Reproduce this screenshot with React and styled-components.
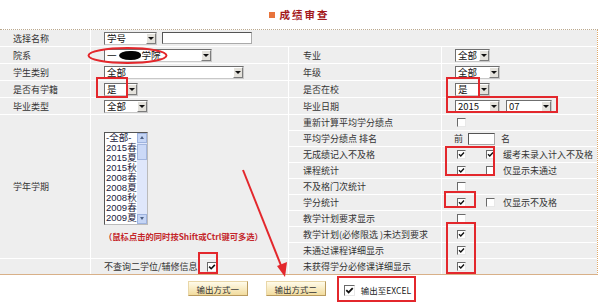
import styled, { createGlobalStyle } from 'styled-components';

const GlobalStyle = createGlobalStyle`
  html, body { margin: 0; padding: 0; background: #fff; }
  body {
    font-family: "Noto Sans CJK SC", "Liberation Sans", sans-serif;
    font-size: 9px;
    color: #333;
  }
`;

const Page = styled.div`
  position: relative;
  width: 599px;
  height: 307px;
  overflow: hidden;
`;

const Header = styled.div`
  width: 598px;
  height: 29px;
  display: flex;
  align-items: center;
  justify-content: center;
  border-bottom: 1px dotted #bba98f;
`;

const TitleMark = styled.span`
  width: 6px;
  height: 6px;
  background: #e8743c;
  margin-right: 5px;
`;

const Title = styled.span`
  font-size: 10.5px;
  font-weight: 700;
  color: #a3191c;
  letter-spacing: 2px;
`;

const Panel = styled.div`
  display: grid;
  grid-template-columns: 90px 197px 152px 155px;
  grid-template-rows: repeat(5, 16px) repeat(10, 15px);
  gap: 1px;
  width: 597px;
  background: #fff;
  border-right: 1px dotted #e0a868;
  border-bottom: 1px solid #d8b088;
`;

const Cell = styled.div`
  background: #eeeeee;
  display: flex;
  align-items: center;
  padding-left: ${(p) => p.$pad ?? 13}px;
  grid-column: ${(p) => p.$col || 'auto'};
  grid-row: ${(p) => p.$row || 'auto'};
  white-space: nowrap;
`;

const StackCell = styled(Cell)`
  flex-direction: column;
  align-items: flex-start;
  justify-content: center;
`;

const SelectBox = styled.div`
  display: inline-flex;
  width: ${(p) => p.$w}px;
  height: 13px;
  box-sizing: border-box;
  background: #fff;
  border: 1px solid;
  border-color: #6f6f6f #c8c8c8 #c8c8c8 #6f6f6f;
  margin-left: ${(p) => p.$ml || 0}px;
`;

const SelectValue = styled.span`
  flex: 1;
  display: flex;
  align-items: center;
  padding-left: 2px;
  font-size: 9.5px;
  color: #111;
  line-height: 11px;
`;

const SelectButton = styled.span`
  width: 10px;
  box-sizing: border-box;
  background: #e4e2dc;
  border: 1px solid;
  border-color: #fff #7c7c7c #7c7c7c #fff;
  display: flex;
  align-items: center;
  justify-content: center;
  &::after {
    content: '';
    border-left: 3px solid transparent;
    border-right: 3px solid transparent;
    border-top: 3px solid #111;
  }
`;

const Redact = styled.span`
  display: inline-block;
  width: 22px;
  height: 9px;
  margin: 0 1px 0 2px;
  background: #050505;
  border-radius: 50% 40% 45% 50%;
`;

const TextInput = styled.div`
  width: ${(p) => p.$w}px;
  height: 12px;
  box-sizing: border-box;
  background: #fff;
  border: 1px solid;
  border-color: #555 #aaa #aaa #555;
  margin-left: ${(p) => p.$ml || 0}px;
`;

const CheckBox = styled.span`
  position: relative;
  display: inline-block;
  width: ${(p) => p.$size || 9}px;
  height: ${(p) => p.$size || 9}px;
  box-sizing: border-box;
  background: #fff;
  border: 1px solid;
  border-color: #6a6a6a #e8e8e8 #e8e8e8 #6a6a6a;
  margin-left: ${(p) => p.$ml || 0}px;
  flex-shrink: 0;
  svg { position: absolute; left: 0; top: 0; }
`;

const Note = styled.div`
  margin-top: 5px;
  font-size: 8.3px;
  font-weight: 700;
  color: #c4262a;
`;

const ListBox = styled.div`
  display: flex;
  width: 44px;
  height: 93px;
  box-sizing: border-box;
  background: #fff;
  border: 1px solid;
  border-color: #555 #bbb #bbb #555;
`;

const ListItems = styled.div`
  flex: 1;
  padding-left: 1px;
  font-size: 9.5px;
  line-height: 10px;
  color: #1b1b40;
  font-family: "Liberation Sans", "Noto Sans CJK SC", sans-serif;
  overflow: hidden;
`;

const ScrollBar = styled.div`
  width: 10px;
  display: flex;
  flex-direction: column;
  background: #dfe7fb;
`;

const ScrollArrow = styled.span`
  height: 10px;
  box-sizing: border-box;
  background: #c5d5f5;
  border: 1px solid #9eb3de;
  display: flex;
  align-items: center;
  justify-content: center;
  &::after {
    content: '';
    border-left: 2.5px solid transparent;
    border-right: 2.5px solid transparent;
    ${(p) => (p.$up ? 'border-bottom: 3px solid #4d6185;' : 'border-top: 3px solid #4d6185;')}
  }
`;

const ScrollTrack = styled.div`
  flex: 1;
  padding-top: 1px;
`;

const ScrollThumb = styled.div`
  height: 16px;
  box-sizing: border-box;
  background: #cbd9f7;
  border: 1px solid #a3b6de;
`;

const BottomBar = styled.div`
  display: flex;
  justify-content: center;
  align-items: center;
  padding-top: 6px;
  width: 599px;
`;

const OutButton = styled.div`
  width: 60px;
  height: 15px;
  box-sizing: border-box;
  display: flex;
  align-items: center;
  justify-content: center;
  font-size: 8.5px;
  color: #333;
  background: linear-gradient(#fffbea, #f2dc9e);
  border: 1px solid;
  border-color: #e9d7a8 #b99a5e #b99a5e #e9d7a8;
  margin-left: ${(p) => p.$ml || 0}px;
`;

const ExcelOption = styled.div`
  display: flex;
  align-items: center;
  gap: 6px;
  margin-left: 18px;
  padding-top: 3px;
  font-size: 8.5px;
  color: #222;
`;

const Spaced = styled.span`
  margin-left: ${(p) => p.$ml}px;
`;

const Overlay = styled.svg`
  position: absolute;
  left: 0;
  top: 0;
  pointer-events: none;
`;

function Select({ w, value, ml }) {
  return (
    <SelectBox $w={w} $ml={ml}>
      <SelectValue>{value}</SelectValue>
      <SelectButton />
    </SelectBox>
  );
}

function Check({ on, size, ml }) {
  return (
    <CheckBox $size={size} $ml={ml}>
      {on && (
        <svg width={(size || 9) - 2} height={(size || 9) - 2} viewBox="0 0 7 7">
          <path d="M1 3.2 L2.8 5 L6 1.6" fill="none" stroke="#111" strokeWidth="1.4" />
        </svg>
      )}
    </CheckBox>
  );
}

const terms = ['-全部-', '2015春', '2015夏', '2015秋', '2008春', '2008夏', '2008秋', '2009春', '2009夏'];

const rightRows = [
  { label: '重新计算平均学分绩点', checks: [false] },
  { label: '平均学分绩点 排名', rank: true },
  { label: '无成绩记入不及格', checks: [true, true], extra: '缓考未录入计入不及格' },
  { label: '课程统计', checks: [true, false], extra: '仅显示未通过' },
  { label: '不及格门次统计', checks: [false] },
  { label: '学分统计', checks: [true, false], extra: '仅显示不及格' },
  { label: '教学计划要求显示', checks: [false] },
  { label: '教学计划(必修限选 )未达到要求', checks: [true] },
  { label: '未通过课程详细显示', checks: [true] },
  { label: '未获得学分必修课详细显示', checks: [true] },
];

function RightRow({ row, label, checks, extra, rank }) {
  return (
    <>
      <Cell $row={row} $col="3" $pad={14}>{label}</Cell>
      <Cell $row={row} $col="4" $pad={rank ? 12 : 15}>
        {rank ? (
          <>
            前
            <TextInput $w={27} $ml={5} />
            <Spaced $ml={6}>名</Spaced>
          </>
        ) : (
          <>
            <Check on={checks[0]} />
            {checks[1] !== undefined && <Check on={checks[1]} ml={20} />}
            {extra && <Spaced $ml={8}>{extra}</Spaced>}
          </>
        )}
      </Cell>
    </>
  );
}

export default function App() {
  return (
    <Page>
      <GlobalStyle />
      <Header>
        <TitleMark />
        <Title>成绩审查</Title>
      </Header>

      <Panel>
        <Cell>选择名称</Cell>
        <Cell $col="2 / span 3">
          <Select w={53} value="学号" />
          <TextInput $w={90} $ml={5} />
        </Cell>

        <Cell>院系</Cell>
        <Cell>
          <Select w={108} value={<>一<Redact />学院</>} />
        </Cell>
        <Cell $pad={14}>专业</Cell>
        <Cell><Select w={35} value="全部" /></Cell>

        <Cell>学生类别</Cell>
        <Cell><Select w={140} value="全部" /></Cell>
        <Cell $pad={14}>年级</Cell>
        <Cell><Select w={45} value="全部" /></Cell>

        <Cell>是否有学籍</Cell>
        <Cell><Select w={34} value="是" /></Cell>
        <Cell $pad={14}>是否在校</Cell>
        <Cell><Select w={35} value="是" /></Cell>

        <Cell>毕业类型</Cell>
        <Cell><Select w={44} value="全部" /></Cell>
        <Cell $pad={14}>毕业日期</Cell>
        <Cell>
          <Select w={45} value="2015" />
          <Select w={46} value="07" ml={6} />
        </Cell>

        <Cell $row="6 / span 9">学年学期</Cell>
        <StackCell $row="6 / span 9" $col="2">
          <ListBox>
            <ListItems>
              {terms.map((t) => (
                <div key={t}>{t}</div>
              ))}
            </ListItems>
            <ScrollBar>
              <ScrollArrow $up />
              <ScrollTrack>
                <ScrollThumb />
              </ScrollTrack>
              <ScrollArrow />
            </ScrollBar>
          </ListBox>
          <Note>（鼠标点击的同时按Shift或Ctrl键可多选）</Note>
        </StackCell>

        {rightRows.map((r, i) => (
          <RightRow key={r.label} row={i + 6} {...r} />
        ))}

        <Cell $row="15" $col="1" />
        <Cell $row="15" $col="2">
          不查询二学位/辅修信息
          <Check on ml={9} size={10} />
        </Cell>
      </Panel>

      <BottomBar>
        <OutButton>输出方式一</OutButton>
        <OutButton $ml={18}>输出方式二</OutButton>
        <ExcelOption>
          <Check on size={11} />
          输出至EXCEL
        </ExcelOption>
      </BottomBar>

      <Overlay width="599" height="307" viewBox="0 0 599 307">
        <g fill="none" stroke="#e3272c" strokeWidth="2">
          <ellipse cx="127.5" cy="55.5" rx="39" ry="7.5" />
          <rect x="97" y="78" width="30" height="19" />
          <rect x="447" y="78" width="32" height="19" />
          <rect x="447" y="97" width="110" height="15" />
          <rect x="446" y="147" width="48" height="28" />
          <rect x="445" y="192" width="30" height="15" />
          <rect x="447" y="223" width="28" height="50" />
          <rect x="199" y="253" width="18" height="20" />
          <rect x="338" y="277" width="77" height="24" />
          <line x1="243" y1="170" x2="282" y2="268" />
        </g>
        <polygon points="285,277 277,266 287,262" fill="#e3272c" />
      </Overlay>
    </Page>
  );
}
